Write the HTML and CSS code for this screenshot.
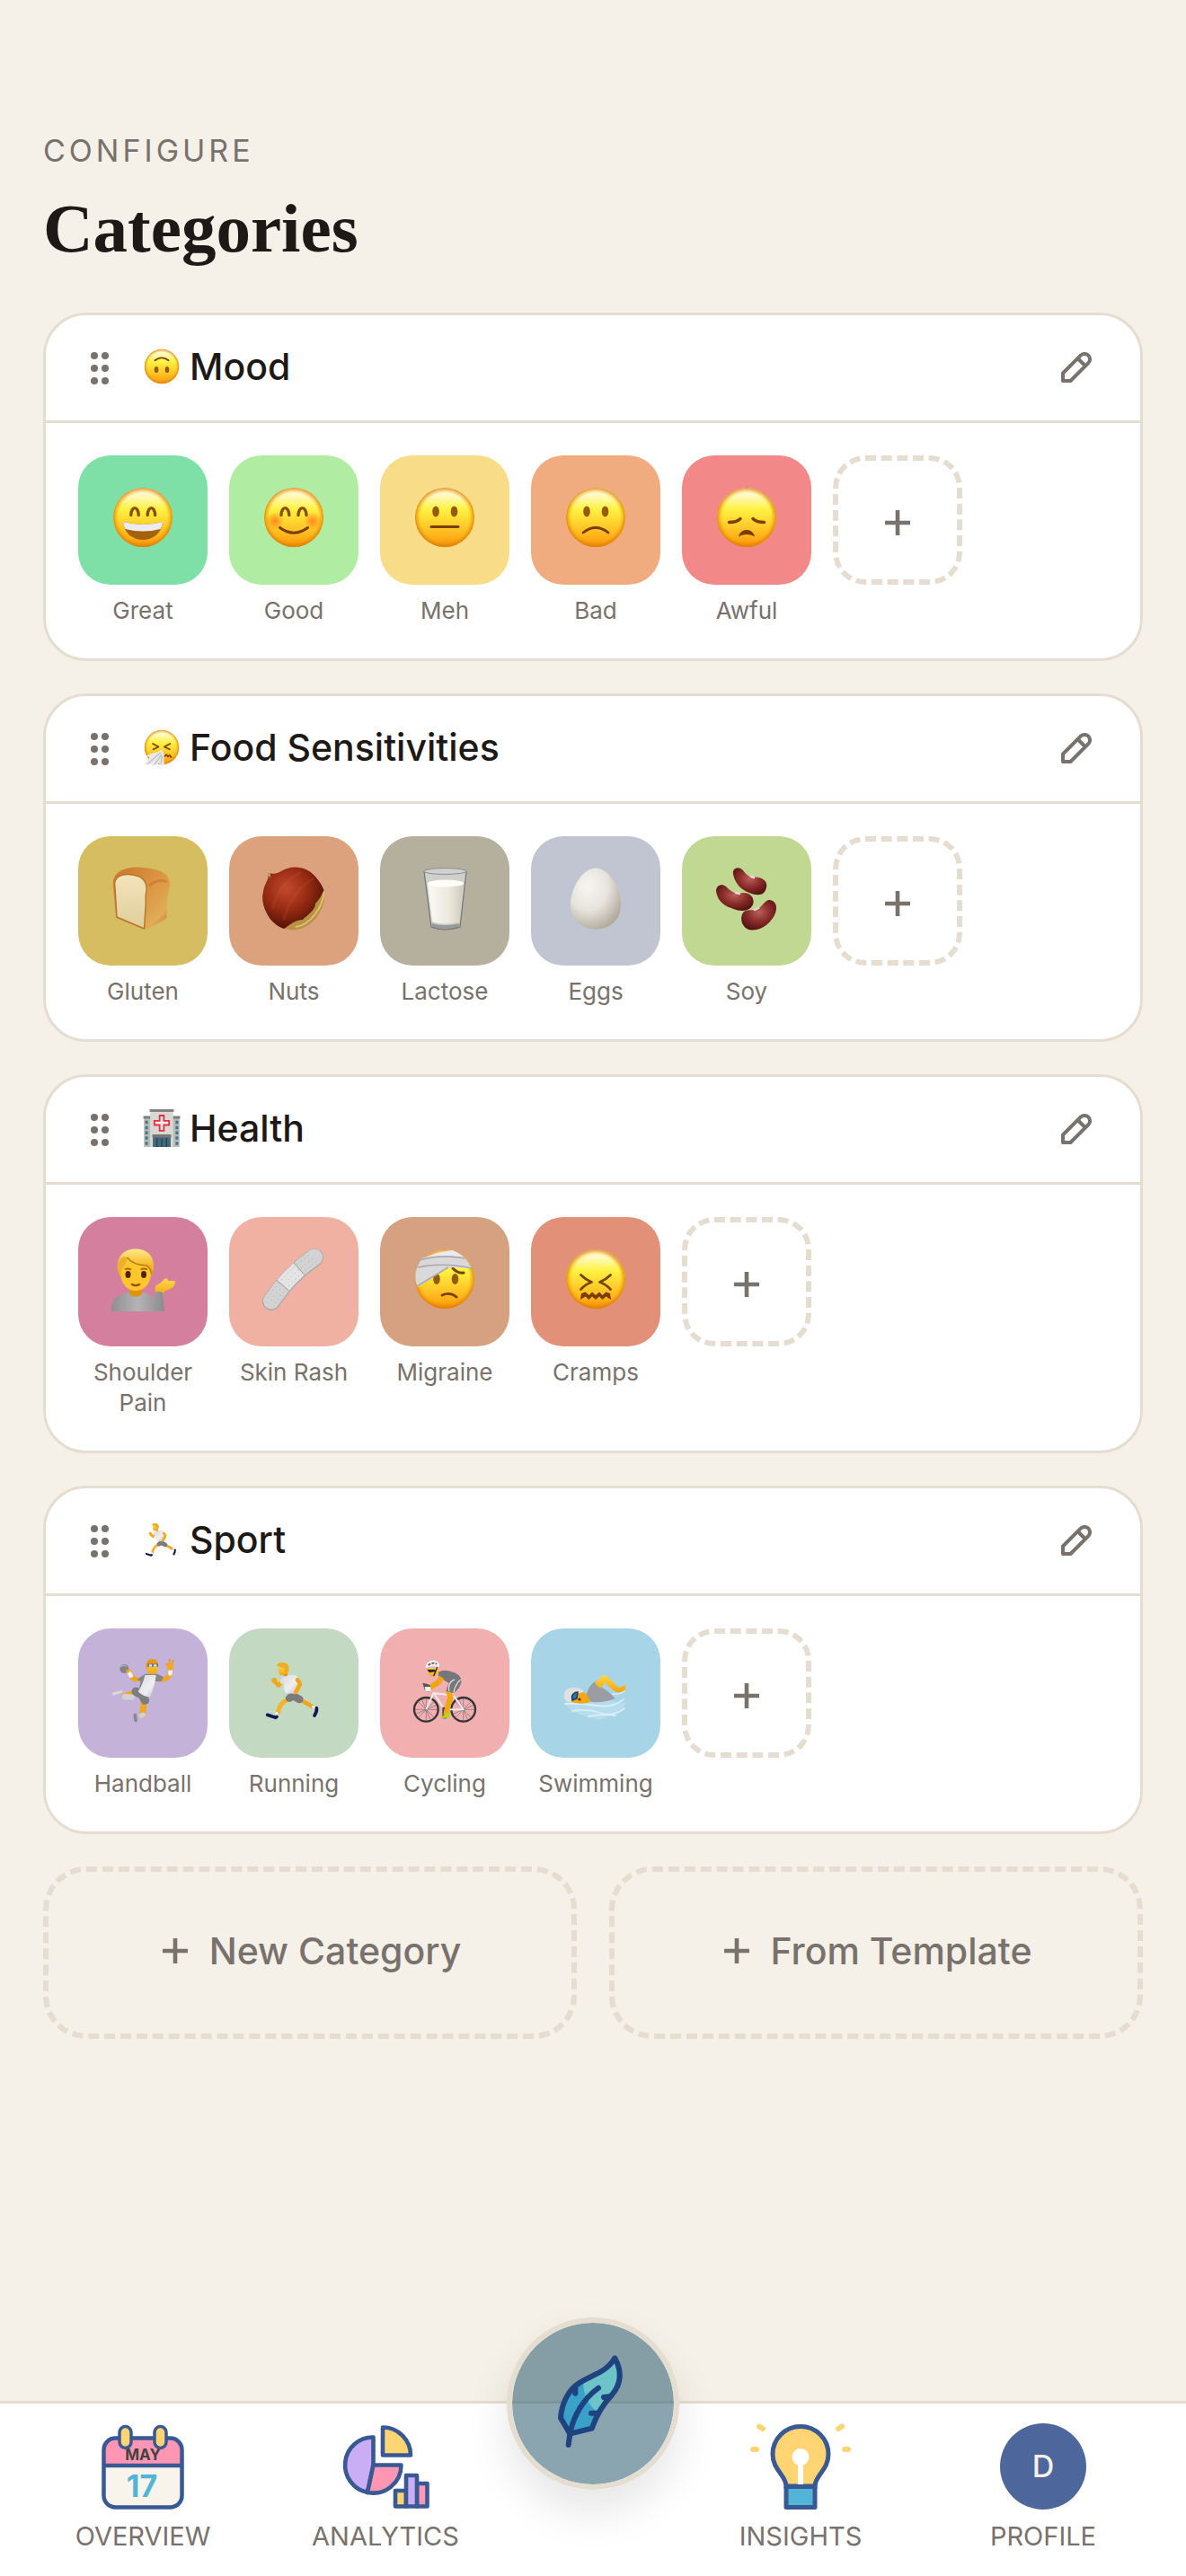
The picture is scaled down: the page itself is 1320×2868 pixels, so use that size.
FILE: index.html
```html
<!DOCTYPE html>
<html lang="en">
<head>
<meta charset="utf-8">
<meta name="viewport" content="width=device-width, initial-scale=1">
<title>Categories</title>
<link rel="stylesheet" href="styles.css">
</head>
<body>
<svg class="sprite" width="0" height="0" aria-hidden="true">
  <defs>
    <linearGradient id="g-face" x1="0" y1="0" x2="0" y2="1">
      <stop offset="0" stop-color="#fffce8"/><stop offset=".15" stop-color="#fff9b8"/>
      <stop offset=".36" stop-color="#fff243"/><stop offset=".62" stop-color="#ffcf2b"/>
      <stop offset=".86" stop-color="#ffac17"/><stop offset="1" stop-color="#ee8c08"/>
    </linearGradient>
    <radialGradient id="g-edge">
      <stop offset=".82" stop-color="#f59a00" stop-opacity="0"/><stop offset="1" stop-color="#d97800" stop-opacity=".8"/>
    </radialGradient>
    <radialGradient id="g-blush">
      <stop offset="0" stop-color="#ff7a1a" stop-opacity=".85"/><stop offset="1" stop-color="#ff7a1a" stop-opacity="0"/>
    </radialGradient>
    <linearGradient id="g-crust" x1="0" y1="0" x2="1" y2="1">
      <stop offset="0" stop-color="#c9762a"/><stop offset=".55" stop-color="#dd9a45"/><stop offset=".8" stop-color="#e0ac55"/><stop offset="1" stop-color="#b8651f"/>
    </linearGradient>
    <linearGradient id="g-crumb" x1="0" y1="0" x2="0" y2="1">
      <stop offset="0" stop-color="#f3e3b9"/><stop offset="1" stop-color="#dfcf9d"/>
    </linearGradient>
    <radialGradient id="g-nut" cx=".4" cy=".35" r=".7">
      <stop offset="0" stop-color="#c24a2c"/><stop offset=".5" stop-color="#962a12"/><stop offset="1" stop-color="#4a0f05"/>
    </radialGradient>
    <radialGradient id="g-egg" cx=".35" cy=".3" r=".8">
      <stop offset="0" stop-color="#f8f6f1"/><stop offset=".5" stop-color="#e6e3dc"/><stop offset="1" stop-color="#aaa294"/>
    </radialGradient>
    <linearGradient id="g-milk" x1="0" y1="0" x2="1" y2="0">
      <stop offset="0" stop-color="#fbfaf4"/><stop offset=".6" stop-color="#ebe8dc"/><stop offset="1" stop-color="#cdcabd"/>
    </linearGradient>
    <radialGradient id="g-bean" cx=".5" cy=".4" r=".6">
      <stop offset="0" stop-color="#b8605a"/><stop offset=".55" stop-color="#8a2c29"/><stop offset="1" stop-color="#571413"/>
    </radialGradient>
    <linearGradient id="g-skin" x1="0" y1="0" x2="0" y2="1">
      <stop offset="0" stop-color="#ffd84a"/><stop offset="1" stop-color="#f2a50f"/>
    </linearGradient>
    <linearGradient id="g-hair" x1="0" y1="0" x2="0" y2="1">
      <stop offset="0" stop-color="#ffe98a"/><stop offset=".5" stop-color="#f7c034"/><stop offset="1" stop-color="#dd9410"/>
    </linearGradient>
    <linearGradient id="g-grey" x1="0" y1="0" x2="1" y2="0">
      <stop offset="0" stop-color="#8f8f92"/><stop offset=".5" stop-color="#b4b4b6"/><stop offset="1" stop-color="#8b8b8e"/>
    </linearGradient>
    <linearGradient id="g-shirt" x1="0" y1="0" x2="1" y2="1">
      <stop offset="0" stop-color="#d9d9dc"/><stop offset=".6" stop-color="#efeff1"/><stop offset="1" stop-color="#bdbdc2"/>
    </linearGradient>
  </defs>

  <symbol id="face" viewBox="0 0 72 72"><circle cx="36" cy="36" r="33" fill="url(#g-face)"/><circle cx="36" cy="36" r="33" fill="url(#g-edge)"/></symbol>

  <symbol id="e-grin" viewBox="0 0 72 72"><use href="#face"/>
    <path d="M22.800 33.500C23 23,31 23,31.200 33.500M41.200 33.500C41.400 23,49.400 23,49.600 33.500" fill="none" stroke="#8a4f06" stroke-width="3.400" stroke-linecap="round"/>
    <path d="M14 41Q36 47 58 41C57 54 47 61 36 61S15 54 14 41z" fill="#a5620a"/>
    <path d="M14 41Q36 47 58 41Q57.500 46 55.500 49Q36 54 16.500 49Q14.500 46 14 41z" fill="#eceaf2"/></symbol>
  <symbol id="e-smile" viewBox="0 0 72 72"><use href="#face"/>
    <circle cx="15" cy="40" r="10" fill="url(#g-blush)"/><circle cx="57" cy="40" r="10" fill="url(#g-blush)"/>
    <path d="M22 33.500C22.200 23,30.400 23,30.800 33.500M41 33.500C41.400 23,49.600 23,50 33.500" fill="none" stroke="#8a4f06" stroke-width="3.400" stroke-linecap="round"/>
    <path d="M20.500 47.500Q36 59 51.500 47.500" fill="none" stroke="#7a3d04" stroke-width="3" stroke-linecap="round"/></symbol>
  <symbol id="e-meh" viewBox="0 0 72 72"><use href="#face"/>
    <ellipse cx="26" cy="29.500" rx="3.800" ry="6" fill="#955b06"/><ellipse cx="46.500" cy="29.500" rx="3.800" ry="6" fill="#955b06"/>
    <path d="M21 46.500H51" stroke="#7a3d04" stroke-width="3" stroke-linecap="round"/></symbol>
  <symbol id="e-sad" viewBox="0 0 72 72"><use href="#face"/>
    <ellipse cx="26" cy="29.500" rx="3.800" ry="6" fill="#955b06"/><ellipse cx="46.500" cy="29.500" rx="3.800" ry="6" fill="#955b06"/>
    <path d="M22 53Q36 42 50 53" fill="none" stroke="#7a3d04" stroke-width="2.800" stroke-linecap="round"/></symbol>
  <symbol id="e-awful" viewBox="0 0 72 72"><use href="#face"/>
    <path d="M16.500 41.500Q25 41.500 29 37.500M55.500 41.500Q47 41.500 43 37.500" fill="none" stroke="#7a4305" stroke-width="3.400" stroke-linecap="round"/>
    <path d="M27 57.500C29 47.500 43 47.500 45 57.500C40 54 32 54 27 57.500z" fill="#7a3d04"/></symbol>
  <symbol id="e-cramps" viewBox="0 0 72 72"><use href="#face"/>
    <path d="M19.500 31.500Q25 37 31.500 39.500Q25 41.500 19.500 47.500M52.500 31.500Q47 37 40.500 39.500Q47 41.500 52.500 47.500" fill="none" stroke="#7a4305" stroke-width="2.800" stroke-linecap="round" stroke-linejoin="round"/>
    <path d="M20 52L24.500 50.500L28.500 54L32 50.500L36 54L40 50.500L43.500 54L47.500 50.500L52 52L53 59L47.500 55.500L43.500 59L40 55.500L36 59L32 55.500L28.500 59L24.500 55.500L19 59z" fill="#7a3d04"/></symbol>
  <symbol id="e-upside" viewBox="0 0 72 72"><use href="#face"/>
    <ellipse cx="25.800" cy="42" rx="4" ry="6.200" fill="#955b06"/><ellipse cx="46.200" cy="42" rx="4" ry="6.200" fill="#955b06"/>
    <path d="M23 24.500Q36 14.500 49 24.500" fill="none" stroke="#7a3d04" stroke-width="3" stroke-linecap="round"/></symbol>
  <symbol id="e-sneeze" viewBox="0 0 72 72"><use href="#face"/>
    <path d="M19 29L30 35L20 40M52 29L41 35L51 40M42 53L45 50L48 54L51 51L54 55" fill="none" stroke="#7a4305" stroke-width="3" stroke-linecap="round" stroke-linejoin="round"/>
    <path d="M36 40C31 47 18 46 7 52L13 56L2 70L17 68L19 72L32 66L31 71L42 70C38 62 43 50 36 40z" fill="#e9e9ea"/>
    <path d="M34 46L9 68M36 50L22 69M37 53L34 68" stroke="#b9b9bd" stroke-width="2"/></symbol>
  <symbol id="e-migraine" viewBox="0 0 72 72"><use href="#face"/>
    <ellipse cx="27" cy="36" rx="3.800" ry="6" fill="#955b06"/><ellipse cx="47.500" cy="36" rx="3.800" ry="6" fill="#955b06"/>
    <path d="M45 24Q50 30 57 29" fill="none" stroke="#7a4305" stroke-width="3" stroke-linecap="round"/>
    <path d="M33 54Q42 50 49 56" fill="none" stroke="#7a3d04" stroke-width="2.800" stroke-linecap="round"/>
    <path d="M10 13Q29 7 44 4Q59 9 66 24L67 23Q66 24 40 23L6 45Q1 36 5 24z" fill="#d9d9dc"/>
    <path d="M8 15Q26 6 44 4Q53 7 58 13Q31 8 8 15z" fill="#ebebed"/>
    <path d="M6 23Q32 17 67 24M8 15Q32 8 58 13M40 23L5 44" fill="none" stroke="#a9a9ae" stroke-width="1.600"/></symbol>

  <symbol id="e-bread" viewBox="0 0 72 72">
    <path d="M3 22C1 6 18 1 31 1.500C50 3 66 6 66 20C66 28 63 32 63 40L62.500 58Q50 67 37 71L6 58z" fill="url(#g-crust)"/>
    <path d="M5 24C3 14 10 9 20 9.500C34 10 41 16 40 28C38 34 40 40 39 46L37.500 70L7 57z" fill="url(#g-crumb)" stroke="#b97429" stroke-width="1.400"/>
    <path d="M43 22C49 17 57 14 63 18" fill="none" stroke="#b8651f" stroke-width="3" opacity=".4"/></symbol>
  <symbol id="e-nut" viewBox="0 0 72 72">
    <path d="M69.500 26C74 45 57 72 34 71.500L24 70L40 55z" fill="#b89345"/>
    <path d="M69.500 28C69 46 54 66 38 68" fill="none" stroke="#e0bf70" stroke-width="2"/>
    <path d="M7.500 8Q15 10 20 7C32 -2 51 0 60 12Q67 20 69.500 27C67 33 64 38 60 42C60 50 50 55 46 60C38 60 31 66 25 70C8 65 -2 42 2 29C3 19 9 16 7.500 8z" fill="url(#g-nut)"/>
    <path d="M7 9L10 8L10 14z" fill="#c5a55c"/>
    <path d="M12 48C18 26 30 14 44 7M25 60C30 38 44 22 58 14" fill="none" stroke="#d2603f" stroke-width="3" opacity=".18"/></symbol>
  <symbol id="e-milk" viewBox="0 0 72 72">
    <path d="M13 6L21 68Q36 74 53 68L60 6z" fill="#d9dbd9" opacity=".75"/>
    <path d="M17 19Q36 25 57 19L52 62Q36 67 22 62z" fill="url(#g-milk)"/><ellipse cx="37" cy="19.500" rx="20" ry="4" fill="#fffefa"/>
    <path d="M21.500 64Q36 68 52.500 64L52 69Q36 73 22 69z" fill="#969b99"/>
    <path d="M13 6L21 68Q36 74 53 68L60 6" fill="none" stroke="#717674" stroke-width="1.200"/>
    <ellipse cx="36.500" cy="6" rx="23.500" ry="3.400" fill="#cfd1d0" stroke="#8b8f8d"/></symbol>
  <symbol id="e-egg" viewBox="0 0 72 72"><path d="M36 2.500C50 2.500 64 24 64 43C64 60 52 70.500 36 70.500S8 60 8 43C8 24 22 2.500 36 2.500z" fill="url(#g-egg)"/></symbol>
  <symbol id="e-beans" viewBox="0 0 72 72">
    <path d="M21 9C20 4 25 0 31 4C34 7 36 11 42 13C52 11 60 17 58 24C56 33 49 34 39 30C29 27 22 17 21 9z" fill="url(#g-bean)"/>
    <path d="M2 28C2 22 8 19 13 23C17 27 22 31 27 31C38 27 46 35 43 43C39 52 28 51 19 47C9 44 3 37 2 28z" fill="url(#g-bean)"/>
    <path d="M57 40C62 35 70 40 69 48C68 59 56 71 43 71.500C33 72 28 62 31 54C34 47 40 50 46 49C51 48 53 43 57 40z" fill="url(#g-bean)"/>
    <path d="M41 12L44 13M24 30L28 31M45 49L49 47" stroke="#f1d5d3" stroke-width="2.400" stroke-linecap="round"/></symbol>

  <symbol id="e-hospital" viewBox="0 0 72 72">
    <path d="M2 15H70V72H2z" fill="#b9b9b6"/><path d="M1 13H71V18H1z" fill="#7c7c7b"/>
    <path d="M14 3H58V72H14z" fill="#d9d8d4"/><path d="M13 0H59V5H13z" fill="#82817f"/>
    <path d="M7 22V68M65 22V68" stroke="#3b7591" stroke-width="5" stroke-dasharray="6 4"/>
    <path d="M19 50H53V72H19z" fill="#416a7d"/><path d="M18 48H54V54H18z" fill="#777775"/><path d="M27 55V72M36 55V72M45 55V72" stroke="#243f4c" stroke-width="2"/>
    <path d="M32 12H40V22H50V30H40V41H32V30H22V22H32z" fill="#f7eaea" stroke="#df3440" stroke-width="3.200"/></symbol>
  <symbol id="e-person" viewBox="0 0 72 72">
    <path d="M50 50Q48 42 55 41L60 36Q64 34 64 38L72 38Q72 46 64 48Q59 49 58 54L51 55z" fill="url(#g-skin)"/>
    <path d="M1 72C1 58 6 54 21 51H36C43 52 47 56 49 60L49 51Q54 49 58 51L60 72z" fill="url(#g-grey)"/>
    <path d="M21 45H35V53Q28 59 21 53z" fill="#df920b"/>
    <path d="M8.500 30C5 12 14 2.500 28 2.500S51 12 47 30L43 34H12z" fill="url(#g-hair)"/>
    <path d="M11 24Q17 21 19 14Q26 21 39 21Q44 23 45 27C46 40 38 49 28 49S10 40 11 24z" fill="#ffc62b"/>
    <path d="M8.500 27C7 14 14 8 19 13Q16 22 12.500 25L11 33z" fill="#eeb02a"/>
    <path d="M18.500 12Q25 20.500 40 21Q44 23 45.500 30" fill="none" stroke="#bb7a05" stroke-width="1.400"/>
    <ellipse cx="19.500" cy="31" rx="3" ry="4" fill="#4b2505"/><ellipse cx="37" cy="31" rx="3" ry="4" fill="#4b2505"/>
    <path d="M16 25.500Q19 23.500 23 25.500M33.500 25.500Q37 23.500 41 25.500" fill="none" stroke="#a7680c" stroke-width="1.800"/>
    <path d="M24 42Q28 44.500 32 42" fill="none" stroke="#a3490c" stroke-width="2.600" stroke-linecap="round"/></symbol>
  <symbol id="e-plaster" viewBox="0 0 72 72">
    <g fill="none"><path d="M11 61Q30 32 59 12" stroke="#a8a8aa" stroke-width="20" stroke-linecap="round"/>
    <path d="M11 60.500Q30 31.500 59 11.500" stroke="#d3d3d4" stroke-width="18" stroke-linecap="round"/>
    <path d="M11 60.500Q30 31.500 59 11.500" stroke="#a6a6a9" stroke-width="18" stroke-dasharray="0 21 27 100"/>
    <path d="M11 60.500Q30 31.500 59 11.500" stroke="#e4e4e5" stroke-width="18" stroke-dasharray="0 22 25 100"/>
    <path d="M7 57Q26 28 55 8M15 63Q34 36 62 16M11 60Q30 32 59 12" stroke="#a3a3a6" stroke-width="1" stroke-dasharray="1 4"/></g></symbol>

  <symbol id="e-handball" viewBox="69 74 216 216">
    <g fill="none" stroke-linecap="round" stroke-linejoin="round">
      <path d="M133 120Q138 145 158 146M240 146Q265 146 270 118" stroke="#f2a716" stroke-width="15"/>
      <path d="M158 186L112 200" stroke="#f2a716" stroke-width="15"/><path d="M181 215L176 264" stroke="#f2a716" stroke-width="20"/>
      <path d="M132 124L137 133M269 118L268 126" stroke="#f1f1f3" stroke-width="14"/>
      <path d="M116 203L140 205" stroke="#d2d2d4" stroke-width="19"/><path d="M172 266L178 264" stroke="#d2d2d4" stroke-width="16"/>
      <path d="M79 194L105 186" stroke="#d9dadd" stroke-width="9"/><path d="M151 264L153 282" stroke="#85888c" stroke-width="11"/>
      <path d="M154 186L176 198L184 215" stroke="#7d7d80" stroke-width="29"/>
    </g>
    <path d="M168 138L185 127L225 127L246 137L238 153L216 151L209 180L202 205L161 188L170 152L158 147z" fill="#858588"/>
    <path d="M184 131H221Q219 152 210 182L202 205Q178 203 161 186Q178 160 184 131z" fill="url(#g-shirt)"/>
    <path d="M260 96L256 96M264 104L267 79M271 104L278 82" stroke="#f0a016" stroke-width="6" stroke-linecap="round"/>
    <circle cx="268" cy="104" r="11" fill="#f3a91a"/><circle cx="115" cy="110" r="15" fill="#838487"/><path d="M104 103Q112 96 122 102" fill="none" stroke="#b0b0b3" stroke-width="4"/><circle cx="126" cy="118" r="6" fill="#f0a016"/>
    <ellipse cx="208" cy="104" rx="20" ry="25" fill="url(#g-skin)"/><path d="M188 104C186 84 198 77 210 77Q225 78 229 96Q208 88 194 98L191 112z" fill="#e59a12"/>
    <path d="M193 98H228" stroke="#6d727a" stroke-width="10"/><path d="M198 99H207M213 99H223" stroke="#d7eef3" stroke-width="7"/>
  </symbol>
  <symbol id="e-run" viewBox="573 74 216 216">
    <g fill="none" stroke-linecap="round" stroke-linejoin="round">
      <path d="M617 152L630 166L642 150" stroke="#f2a716" stroke-width="13"/>
      <path d="M656 215Q634 225 628 256" stroke="#f5b32a" stroke-width="15"/>
      <path d="M704 214L743 236" stroke="#f0a51b" stroke-width="14"/>
      <path d="M624 258V263M745 237L750 240" stroke="#f1f1f4" stroke-width="9"/>
      <path d="M593 264L620 273L624 270" stroke="#101653" stroke-width="11"/><path d="M757 241Q759 253 750 266" stroke="#101653" stroke-width="11"/>
      <path d="M666 208L678 200L700 212" stroke="#7b7b7e" stroke-width="25"/>
    </g>
    <path d="M634 148Q648 133 660 131H684Q698 138 697 148L692 164L689 194L653 191Q646 177 647 157L637 160z" fill="url(#g-shirt)"/>
    <path d="M693 147Q706 160 699 167L688 188" fill="none" stroke="#f2a716" stroke-width="14" stroke-linecap="round" stroke-linejoin="round"/>
    <circle cx="616" cy="149" r="9" fill="#f2a716"/>
    <path d="M646 122H660V132Q652 138 645 131z" fill="#df920b"/>
    <path d="M630 103L664 101L660 122Q650 133 636 131Q629 124 630 116z" fill="url(#g-skin)"/>
    <path d="M623 98Q633 85 650 89Q668 95 664 117L657 128L650 117V108Q636 107 623 98z" fill="#edae27"/>
  </symbol>
  <symbol id="e-bike" viewBox="1077 74 216 216">
    <g fill="none" stroke="#333537">
      <circle cx="1123" cy="246" r="40" stroke-width="7"/><circle cx="1247" cy="246" r="40" stroke-width="7"/>
      <path stroke-width="1.500" stroke="#55565a" d="M1085 246H1161M1123 208V284M1096 219L1150 273M1150 219L1096 273M1108 211L1138 281M1158 231L1088 261M1209 246H1285M1247 208V284M1220 219L1274 273M1274 219L1220 273M1232 211L1262 281M1282 231L1212 261"/>
      <path d="M1123 246L1148 190L1184 246H1247L1215 200M1184 246L1208 198L1146 191" stroke="#ececef" stroke-width="6" stroke-linejoin="round"/>
      <path d="M1184 238V276" stroke="#4b4c50" stroke-width="14"/>
      <path d="M1198 188Q1208 205 1198 224L1190 258" stroke="#efa80d" stroke-width="18" stroke-linecap="round"/>
    </g>
    <path d="M1171 270Q1186 265 1189 256L1203 257L1202 272L1174 276z" fill="#bad414"/>
    <path d="M1163 121Q1185 109 1218 123Q1243 134 1240 157Q1233 179 1215 191L1189 184L1198 157L1165 138z" fill="#77777a"/>
    <path d="M1218 146Q1193 155 1200 185M1215 189Q1219 163 1238 146" fill="none" stroke="#d8d8dc" stroke-width="4"/>
    <path d="M1175 138L1164 155L1131 175" fill="none" stroke="#f0a613" stroke-width="18" stroke-linejoin="round"/>
    <path d="M1111 157Q1129 159 1137 166L1138 184Q1123 191 1117 177z" fill="#57585c"/><path d="M1118 170L1138 170L1139 185L1121 185z" fill="#f2f2f4"/>
    <path d="M1127 108H1164L1165 120Q1157 137 1142 136L1129 127z" fill="url(#g-skin)"/><path d="M1126 112H1153V120L1133 122z" fill="#252628"/><path d="M1160 105L1148 134" stroke="#1f1f20" stroke-width="4"/>
    <path d="M1121 108Q1120 84 1147 81Q1172 86 1167 105Q1142 97 1121 108z" fill="#eeeef0"/><path d="M1130 98Q1144 86 1158 94" fill="none" stroke="#57595d" stroke-width="5" stroke-dasharray="9 4"/>
  </symbol>
  <symbol id="e-swim" viewBox="0 0 72 72">
    <path d="M1 50Q36 44 69 50Q67 60 40 69Q9 62 1 50z" fill="#d3eff8" opacity=".35"/>
    <path d="M2 51Q20 50 37 53T67 46M10 59Q26 56 41 61T68 56M28 65Q43 62 58 64M55 40Q62 41 68 37" fill="none" stroke="#e6f7fc" stroke-width="1.800" stroke-linecap="round" opacity=".7"/>
    <path d="M25 44Q27 30 37 25L43 33Q51 37 57.500 45Q47 50 31 49z" fill="#9a9ea3"/>
    <path d="M35 27Q41 22 44 19.500Q47 18 49 20.500L62 33L69.500 29.500Q71 36 64 38Q58 38.500 56 36L46 28L41 34Q38 32 35 27z" fill="url(#g-skin)"/>
    <path d="M20 36Q28 40 30 49Q22 52 10 49.500L8 44z" fill="#f2a716"/><path d="M1 45Q-1 33 12 33Q20 33 23 38Q11 39 8 49Q3 49 1 45z" fill="#dfe1e3"/>
    <path d="M9.500 43Q11 38 16 38L15 45L10 47z" fill="#2378b7" stroke="#263746" stroke-width="1.500"/><circle cx="18" cy="46" r="1.600" fill="#6b2207"/>
  </symbol>

  <symbol id="i-grip" viewBox="0 0 48 48"><g fill="currentColor"><circle cx="18" cy="10" r="4"/><circle cx="30" cy="10" r="4"/><circle cx="18" cy="24" r="4"/><circle cx="30" cy="24" r="4"/><circle cx="18" cy="38" r="4"/><circle cx="30" cy="38" r="4"/></g></symbol>
  <symbol id="i-pencil" viewBox="0 0 36 36"><path d="M4 32V23.500L23.800 3.700A6 6 0 0 1 32.300 12.200L12.500 32zM20.500 7L29 15.500" fill="none" stroke="currentColor" stroke-width="4" stroke-linejoin="round"/></symbol>
  <symbol id="i-plus" viewBox="0 0 36 36"><path d="M4 18H32M18 4V32" stroke="currentColor" stroke-width="4.600"/></symbol>
</svg>

<main class="page">
  <header class="page-head">
    <p class="eyebrow">CONFIGURE</p>
    <h1 class="title">Categories</h1>
  </header>

  <section class="card">
    <div class="card-head">
      <button class="grip" aria-label="Reorder Mood"><svg><use href="#i-grip"/></svg></button>
      <h2 class="card-name"><svg class="emoji-s" aria-hidden="true"><use href="#e-upside"/></svg>Mood</h2>
      <button class="edit" aria-label="Edit Mood"><svg><use href="#i-pencil"/></svg></button>
    </div>
    <div class="items">
      <button class="item"><span class="tile great"><svg><use href="#e-grin"/></svg></span><span class="label">Great</span></button>
      <button class="item"><span class="tile good"><svg><use href="#e-smile"/></svg></span><span class="label">Good</span></button>
      <button class="item"><span class="tile meh"><svg><use href="#e-meh"/></svg></span><span class="label">Meh</span></button>
      <button class="item"><span class="tile bad"><svg><use href="#e-sad"/></svg></span><span class="label">Bad</span></button>
      <button class="item"><span class="tile awful"><svg><use href="#e-awful"/></svg></span><span class="label">Awful</span></button>
      <button class="add" aria-label="Add to Mood"><svg class="plus"><use href="#i-plus"/></svg></button>
    </div>
  </section>

  <section class="card">
    <div class="card-head">
      <button class="grip" aria-label="Reorder Food Sensitivities"><svg><use href="#i-grip"/></svg></button>
      <h2 class="card-name"><svg class="emoji-s" aria-hidden="true"><use href="#e-sneeze"/></svg>Food Sensitivities</h2>
      <button class="edit" aria-label="Edit Food Sensitivities"><svg><use href="#i-pencil"/></svg></button>
    </div>
    <div class="items">
      <button class="item"><span class="tile gluten"><svg><use href="#e-bread"/></svg></span><span class="label">Gluten</span></button>
      <button class="item"><span class="tile nuts"><svg><use href="#e-nut"/></svg></span><span class="label">Nuts</span></button>
      <button class="item"><span class="tile lactose"><svg><use href="#e-milk"/></svg></span><span class="label">Lactose</span></button>
      <button class="item"><span class="tile eggs"><svg><use href="#e-egg"/></svg></span><span class="label">Eggs</span></button>
      <button class="item"><span class="tile soy"><svg><use href="#e-beans"/></svg></span><span class="label">Soy</span></button>
      <button class="add" aria-label="Add to Food Sensitivities"><svg class="plus"><use href="#i-plus"/></svg></button>
    </div>
  </section>

  <section class="card">
    <div class="card-head">
      <button class="grip" aria-label="Reorder Health"><svg><use href="#i-grip"/></svg></button>
      <h2 class="card-name"><svg class="emoji-s" aria-hidden="true"><use href="#e-hospital"/></svg>Health</h2>
      <button class="edit" aria-label="Edit Health"><svg><use href="#i-pencil"/></svg></button>
    </div>
    <div class="items">
      <button class="item"><span class="tile shoulder"><svg><use href="#e-person"/></svg></span><span class="label">Shoulder Pain</span></button>
      <button class="item"><span class="tile skin"><svg><use href="#e-plaster"/></svg></span><span class="label">Skin Rash</span></button>
      <button class="item"><span class="tile migraine"><svg><use href="#e-migraine"/></svg></span><span class="label">Migraine</span></button>
      <button class="item"><span class="tile cramps"><svg><use href="#e-cramps"/></svg></span><span class="label">Cramps</span></button>
      <button class="add" aria-label="Add to Health"><svg class="plus"><use href="#i-plus"/></svg></button>
    </div>
  </section>

  <section class="card">
    <div class="card-head">
      <button class="grip" aria-label="Reorder Sport"><svg><use href="#i-grip"/></svg></button>
      <h2 class="card-name"><svg class="emoji-s" aria-hidden="true"><use href="#e-run"/></svg>Sport</h2>
      <button class="edit" aria-label="Edit Sport"><svg><use href="#i-pencil"/></svg></button>
    </div>
    <div class="items">
      <button class="item"><span class="tile handball"><svg><use href="#e-handball"/></svg></span><span class="label">Handball</span></button>
      <button class="item"><span class="tile running"><svg><use href="#e-run"/></svg></span><span class="label">Running</span></button>
      <button class="item"><span class="tile cycling"><svg><use href="#e-bike"/></svg></span><span class="label">Cycling</span></button>
      <button class="item"><span class="tile swimming"><svg><use href="#e-swim"/></svg></span><span class="label">Swimming</span></button>
      <button class="add" aria-label="Add to Sport"><svg class="plus"><use href="#i-plus"/></svg></button>
    </div>
  </section>

  <div class="actions">
    <button class="action"><svg class="plus"><use href="#i-plus"/></svg>New Category</button>
    <button class="action"><svg class="plus"><use href="#i-plus"/></svg>From Template</button>
  </div>
</main>

<nav class="tabs">
  <a class="tab" href="#overview">
    <svg class="tab-icon" viewBox="0 0 96 96" aria-hidden="true">
      <rect x="4.500" y="16.500" width="87" height="77" rx="13" fill="#f8f4ec"/>
      <path d="M4.500 47V29.500A13 13 0 0 1 17.500 16.500H78.500A13 13 0 0 1 91.500 29.500V47z" fill="#ff96b4"/>
      <path d="M4.500 47H91.500" stroke="#385993" stroke-width="4.500"/>
      <rect x="4.500" y="16.500" width="87" height="77" rx="13" fill="none" stroke="#385993" stroke-width="4.500"/>
      <text class="cal-month" x="48" y="41">MAY</text>
      <g fill="#ffd574" stroke="#385993" stroke-width="3.500"><rect x="22" y="3.500" width="13" height="24" rx="6.500"/><rect x="61" y="3.500" width="13" height="24" rx="6.500"/></g>
      <text class="cal-day" x="47" y="82">17</text>
    </svg>
    <span>OVERVIEW</span>
  </a>
  <a class="tab" href="#analytics">
    <svg class="tab-icon" viewBox="0 0 96 96" aria-hidden="true">
      <g stroke="#385993" stroke-width="4.600" stroke-linejoin="round">
        <path d="M45 35.500V4.500A31 31 0 0 1 76 35.500z" fill="#ffd574"/>
        <path d="M34.500 46.500V15.500A31 31 0 0 0 28 76.900z" fill="#c9adf5"/>
        <path d="M34.500 46.500H65.500A31 31 0 0 1 28 76.900z" fill="#ff96b4"/>
        <path d="M59 75H71V92.500H59z" fill="#ffd574"/><path d="M83 67H94.500V92.500H83z" fill="#ff96b4"/><path d="M71 58H83V92.500H71z" fill="#c9adf5"/>
      </g>
    </svg>
    <span>ANALYTICS</span>
  </a>
  <button class="compose" aria-label="New entry">
    <svg class="feather" viewBox="258 185 324 324" aria-hidden="true">
      <path d="M493 195C512 230 520 275 483 318C452 350 432 385 416 431L343 448L312 395C315 345 340 300 372 280C410 255 465 245 493 195z" fill="#3aa2c8"/>
      <path d="M388 272C430 252 470 240 493 195C512 230 520 275 483 318L430 371C405 350 385 315 388 272z" fill="#6cc4c9"/>
      <g fill="none" stroke="#1e437e" stroke-width="18" stroke-linecap="round" stroke-linejoin="round">
        <path d="M493 195C512 230 520 275 483 318C452 350 432 385 416 430L343 448L312 395C315 345 340 300 372 280C410 252 465 245 493 195z"/>
        <path d="M438 295C390 330 355 385 343 448L338 485M456 326L478 323M414 379L436 379M361 313V294"/>
      </g>
    </svg>
  </button>
  <a class="tab" href="#insights">
    <svg class="tab-icon" viewBox="0 0 96 96" aria-hidden="true">
      <path d="M32 70C32 58 17 52 17 34.500A31 31 0 0 1 79 34.500C79 52 64 58 64 70z" fill="#ffd574" stroke="#385993" stroke-width="5"/>
      <path d="M48 37V70" stroke="#fff" stroke-width="6"/><circle cx="48" cy="37.500" r="9.500" fill="#fff"/>
      <rect x="32" y="70.500" width="32" height="23" fill="#52b4d6" stroke="#385993" stroke-width="5" stroke-linejoin="round"/>
      <path d="M2 3.500L6 6M-5 29H-1M94 3.500L90 6M97 29H101" stroke="#ffd574" stroke-width="6" stroke-linecap="round"/>
    </svg>
    <span>INSIGHTS</span>
  </a>
  <a class="tab" href="#profile">
    <span class="avatar">D</span>
    <span>PROFILE</span>
  </a>
</nav>
</body>
</html>
```
FILE: styles.css
```css
:root {
  --bg: #f5f0e8;
  --line: #e5ddd0;
  --ink: #1c1917;
  --muted: #78716c;
}

* { box-sizing: border-box; }

body {
  margin: 0;
  min-height: 100vh;
  display: flex;
  flex-direction: column;
  background: var(--bg);
  color: var(--ink);
  font-family: Inter, "Liberation Sans", sans-serif;
}

button {
  margin: 0;
  padding: 0;
  border: 0;
  background: none;
  color: inherit;
  font: inherit;
}

.sprite { position: absolute; }

.page {
  display: flex;
  flex-direction: column;
  gap: 36px;
  padding: 144px 48px 48px;
}

.page-head {
  display: flex;
  flex-direction: column;
  gap: 14px;
  padding-bottom: 10px;
}

.eyebrow {
  margin: 0;
  font-size: 34px;
  line-height: 48px;
  letter-spacing: 4px;
  color: var(--muted);
}

.title {
  margin: 0;
  font-family: "Liberation Serif", serif;
  font-size: 77px;
  font-weight: 700;
  line-height: 96px;
}

.card {
  border: 3px solid var(--line);
  border-radius: 48px;
  background: #fff;
}

.card-head {
  display: flex;
  align-items: center;
  height: 120px;
  padding: 0 42px 0 36px;
  border-bottom: 3px solid var(--line);
}

.grip, .edit {
  display: grid;
  place-items: center;
  color: var(--muted);
}

.grip { margin-right: 24px; }
.grip svg { width: 48px; height: 48px; }
.edit { width: 60px; height: 60px; }
.edit svg { width: 36px; height: 36px; }

.card-name {
  display: flex;
  align-items: center;
  flex: 1;
  gap: 10px;
  margin: 0;
  padding-bottom: 4px;
  font-size: 41px;
  font-weight: 500;
  line-height: 48px;
}

.emoji-s { width: 42px; height: 42px; }

.items {
  display: flex;
  flex-wrap: wrap;
  align-items: flex-start;
  gap: 24px;
  padding: 36px;
}

.item {
  display: flex;
  flex-direction: column;
  gap: 12px;
  width: 144px;
}

.tile, .add {
  display: grid;
  place-items: center;
  width: 144px;
  height: 144px;
  border-radius: 36px;
}

.tile { padding-bottom: 6px; }
.tile svg { width: 72px; height: 72px; }

.add {
  padding-top: 6px;
  border: 6px dashed var(--line);
  color: var(--muted);
}

.plus { width: 36px; height: 36px; }

.label {
  font-size: 26px;
  line-height: 34px;
  text-align: center;
  color: var(--muted);
}

.great { background: #7ee0a7; }
.good { background: #b0eda3; }
.meh { background: #f8dc88; }
.bad { background: #f0ab7e; }
.awful { background: #f28888; }
.gluten { background: #d6bd62; }
.nuts { background: #dca27e; }
.lactose { background: #b5af9d; }
.eggs { background: #c1c5d2; }
.soy { background: #c0d891; }
.shoulder { background: #d57f9f; }
.skin { background: #f0b1a2; }
.migraine { background: #d6a181; }
.cramps { background: #e39079; }
.handball { background: #c4b2d8; }
.running { background: #c3d9c1; }
.cycling { background: #f1afb0; }
.swimming { background: #a7d4e7; }

.actions {
  display: grid;
  grid-template-columns: 1fr 1fr;
  gap: 36px;
}

.action {
  display: flex;
  align-items: center;
  justify-content: center;
  gap: 20px;
  height: 192px;
  padding-bottom: 4px;
  border: 6px dashed var(--line);
  border-radius: 48px;
  color: var(--muted);
  font-size: 41px;
  font-weight: 500;
}

.tabs {
  display: grid;
  grid-template-columns: 1fr 1fr 192px 1fr 1fr;
  height: 195px;
  margin-top: auto;
  padding: 22px 24px 0;
  border-top: 3px solid var(--line);
  background: #fff;
}

.tab {
  display: flex;
  flex-direction: column;
  align-items: center;
  gap: 12px;
  color: var(--muted);
  font-size: 29px;
  line-height: 36px;
  text-decoration: none;
}

.tab-icon {
  width: 96px;
  height: 96px;
  overflow: visible;
}

.cal-month, .cal-day {
  font-weight: 700;
  text-anchor: middle;
}

.cal-month {
  font-size: 17px;
  fill: #44423f;
}

.cal-day {
  font-size: 34px;
  fill: #52b4d6;
}

.avatar {
  display: grid;
  place-items: center;
  width: 96px;
  height: 96px;
  border-radius: 50%;
  background: #4d669b;
  color: var(--bg);
  font-size: 34px;
  font-weight: 500;
}

/* The round button straddles the top edge of the tab bar. */
.compose {
  display: grid;
  place-items: center;
  width: 192px;
  height: 192px;
  margin-top: -118px;
  border: 6px solid var(--line);
  border-radius: 50%;
  background: rgba(22, 76, 98, .5);
  background-clip: padding-box;
  box-shadow: 0 24px 48px rgba(0, 0, 0, .1);
}

.feather {
  width: 108px;
  height: 108px;
  overflow: visible;
}
```
